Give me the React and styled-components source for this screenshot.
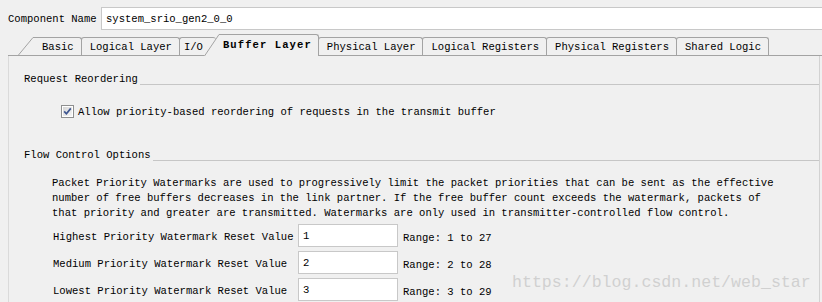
import React from 'react'
import styled, { createGlobalStyle } from 'styled-components'

const GlobalStyle = createGlobalStyle`
    body {
        margin: 0;
        background: #f0f0f0;
        font-family: "Liberation Mono", "Noto Sans CJK SC", monospace;
        font-size: 10.55px;
        color: #000;
    }
`;

const Page = styled.div`
    position: relative;
    height: 302px;
    overflow: hidden;
    display: flex;
    flex-direction: column;
`;

const TopRow = styled.div`
    display: flex;
    align-items: center;
    padding: 7px 0 0 8px;
`;

const NameLabel = styled.div`
    width: 93px;
    white-space: nowrap;
`;

const TextBox = styled.div`
    box-sizing: border-box;
    height: 23px;
    display: flex;
    align-items: center;
    padding-left: 4px;
    background: #fff;
    border: 1px solid #c8c8c8;
    ${props => props.grow ? 'flex: 1; border-right: none;' : 'width: 100px;'}
    white-space: nowrap;
`;

const TabBar = styled.div`
    display: flex;
    align-items: flex-end;
    height: 21px;
    margin: 4px 0 0 8px;
    padding-left: 10px;
    border-bottom: 1px solid #a3a3a3;
`;

const TabWrap = styled.div`
    display: flex;
    align-items: stretch;
    height: ${props => props.selected ? '22px' : '18px'};
    margin-bottom: ${props => props.selected ? '-1px' : '0'};
    margin-left: ${props => props.shift}px;
`;

const TabBody = styled.div`
    box-sizing: border-box;
    display: flex;
    align-items: center;
    padding: ${props => props.pad};
    background: #f0f0f0;
    border-top: 1px solid #a3a3a3;
    border-left: ${props => props.slant ? 'none' : '1px solid #a3a3a3'};
    border-right: ${props => props.open ? 'none' : '1px solid #a3a3a3'};
    border-radius: ${props => props.slant ? '0 3px 0 0' : '3px 3px 0 0'};
    white-space: nowrap;
    font-weight: ${props => props.selected ? 'bold' : 'normal'};
    letter-spacing: ${props => props.selected ? '1.08px' : '0'};
    padding-bottom: ${props => props.selected ? '2px' : '0'};
`;

const Panel = styled.div`
    flex: 1;
    margin: 0 2px 0 8px;
    padding: 17px 0 0 15px;
    border-left: 1px solid #dadada;
    border-right: 1px solid #d2d2d2;
`;

const SectionHeader = styled.div`
    display: flex;
    align-items: flex-end;
    margin-top: ${props => props.top}px;
`;

const SectionTitle = styled.span`
    line-height: 12px;
    white-space: nowrap;
`;

const Rule = styled.div`
    flex: 1;
    margin-left: 2px;
    border-bottom: 1px solid #c6c6c6;
`;

const CheckRow = styled.label`
    display: flex;
    align-items: center;
    gap: 4px;
    height: 13px;
    margin: 20px 0 0 37px;
    white-space: nowrap;
`;

const Paragraph = styled.div`
    margin: 15px 0 0 28px;
    line-height: 15px;
    white-space: nowrap;
`;

const Fields = styled.div`
    display: flex;
    flex-direction: column;
    gap: 4px;
    margin: 3px 0 0 29px;
`;

const FieldRow = styled.div`
    display: flex;
    align-items: center;
`;

const FieldLabel = styled.div`
    width: 245px;
    padding-top: 3px;
    white-space: nowrap;
`;

const Range = styled.div`
    margin-left: 5px;
    padding-top: 5px;
    white-space: nowrap;
`;

const Watermark = styled.div`
    position: absolute;
    left: 512px;
    top: 274px;
    font-size: 16.6px;
    line-height: 18px;
    color: #d0d0d0;
    white-space: nowrap;
`;

function Slant({ height }) {
    return (
        <svg width="15" height={height} style={{ display: 'block', flex: 'none' }}>
            <path d={`M0 ${height} L15 0 L15 ${height} Z`} fill="#f0f0f0" />
            <path d={`M0.5 ${height} L15 0.5`} stroke="#a3a3a3" strokeWidth="1" fill="none" />
        </svg>
    )
}

function Tab({ label, slant, selected, open, pad, shift = -1 }) {
    return (
        <TabWrap selected={selected} shift={shift}>
            {slant && <Slant height={selected ? 22 : 18} />}
            <TabBody slant={slant} selected={selected} open={open} pad={pad}>
                {label}
            </TabBody>
        </TabWrap>
    )
}

function CheckBox() {
    return (
        <svg width="13" height="13" style={{ display: 'block' }}>
            <defs>
                <linearGradient id="cbg" x1="0" y1="0" x2="1" y2="1">
                    <stop offset="0" stopColor="#d6d6d6" />
                    <stop offset="1" stopColor="#f6f6f6" />
                </linearGradient>
            </defs>
            <rect x="0.5" y="0.5" width="12" height="12" fill="#fff" stroke="#8e8f8f" />
            <rect x="2" y="2" width="9" height="9" fill="url(#cbg)" />
            <path d="M3.2 6.4 L5.4 8.8 L9.8 3.4" stroke="#3d5590" strokeWidth="1.7" fill="none" />
        </svg>
    )
}

const fields = [
    { label: 'Highest Priority Watermark Reset Value', value: '1', range: 'Range: 1 to 27' },
    { label: 'Medium Priority Watermark Reset Value', value: '2', range: 'Range: 2 to 28' },
    { label: 'Lowest Priority Watermark Reset Value', value: '3', range: 'Range: 3 to 29' },
];

export default function App() {
    return (
        <Page>
            <GlobalStyle />
            <TopRow>
                <NameLabel>Component Name</NameLabel>
                <TextBox grow>system_srio_gen2_0_0</TextBox>
            </TopRow>

            <TabBar>
                <Tab label="Basic" slant pad="0 7px 0 9px" shift={0} />
                <Tab label="Logical Layer" pad="0 7px 0 8px" />
                <Tab label="I/O" open pad="0 13px 0 4px" />
                <Tab label="Buffer Layer" slant selected pad="0 6px 0 4px" shift={-12} />
                <Tab label="Physical Layer" pad="0 7px 0 8px" />
                <Tab label="Logical Registers" pad="0 7px 0 8px" />
                <Tab label="Physical Registers" pad="0 7px 0 8px" />
                <Tab label="Shared Logic" pad="0 7px 0 8px" />
            </TabBar>

            <Panel>
                <SectionHeader top={0}>
                    <SectionTitle>Request Reordering</SectionTitle>
                    <Rule />
                </SectionHeader>
                <CheckRow>
                    <CheckBox />
                    Allow priority-based reordering of requests in the transmit buffer
                </CheckRow>

                <SectionHeader top={31}>
                    <SectionTitle>Flow Control Options</SectionTitle>
                    <Rule />
                </SectionHeader>
                <Paragraph>
                    Packet Priority Watermarks are used to progressively limit the packet priorities that can be sent as the effective<br />
                    number of free buffers decreases in the link partner. If the free buffer count exceeds the watermark, packets of<br />
                    that priority and greater are transmitted. Watermarks are only used in transmitter-controlled flow control.
                </Paragraph>
                <Fields>
                    {fields.map(f => (
                        <FieldRow key={f.label}>
                            <FieldLabel>{f.label}</FieldLabel>
                            <TextBox>{f.value}</TextBox>
                            <Range>{f.range}</Range>
                        </FieldRow>
                    ))}
                </Fields>
            </Panel>

            <Watermark>https://blog.csdn.net/web_star</Watermark>
        </Page>
    )
}
